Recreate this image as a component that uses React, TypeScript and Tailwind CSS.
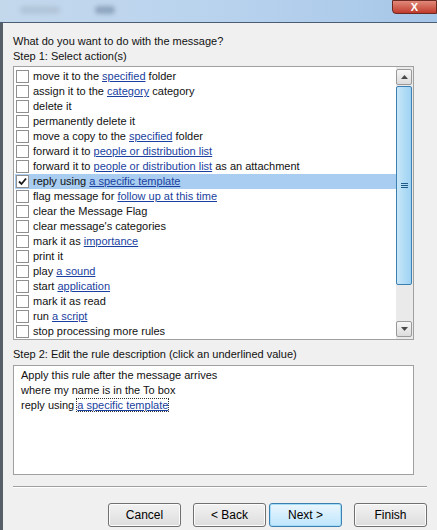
import React from "react";

type Part = string | { link: string };

const actions: Part[][] = [
  ["move it to the ", { link: "specified" }, " folder"],
  ["assign it to the ", { link: "category" }, " category"],
  ["delete it"],
  ["permanently delete it"],
  ["move a copy to the ", { link: "specified" }, " folder"],
  ["forward it to ", { link: "people or distribution list" }],
  ["forward it to ", { link: "people or distribution list" }, " as an attachment"],
  ["reply using ", { link: "a specific template" }],
  ["flag message for ", { link: "follow up at this time" }],
  ["clear the Message Flag"],
  ["clear message's categories"],
  ["mark it as ", { link: "importance" }],
  ["print it"],
  ["play ", { link: "a sound" }],
  ["start ", { link: "application" }],
  ["mark it as read"],
  ["run ", { link: "a script" }],
  ["stop processing more rules"],
];

function Checkbox({ checked }: { checked?: boolean }) {
  return (
    <span className="w-[13px] h-[13px] shrink-0 border border-[#8f8f8f] bg-white flex items-center justify-center">
      {checked && (
        <svg width="9" height="9" viewBox="0 0 9 9">
          <path d="M1 4.5 L3.5 7 L8 1.5" fill="none" stroke="#1a1a1a" strokeWidth="1.8" />
        </svg>
      )}
    </span>
  );
}

function Btn({ label, primary }: { label: string; primary?: boolean }) {
  return (
    <button
      className={
        "w-[73px] h-[24px] rounded-[3px] text-[12px] text-black border " +
        (primary
          ? "border-[#3c7fb1] bg-gradient-to-b from-[#eaf6fd] to-[#bee6fd] shadow-[inset_0_0_0_1px_#a6def9]"
          : "border-[#707070] bg-gradient-to-b from-[#f2f2f2] to-[#dddddd] shadow-[inset_0_0_0_1px_#fcfcfc]")
      }
    >
      {label}
    </button>
  );
}

export default function App() {
  return (
    <div className="w-[437px] h-[530px] overflow-hidden bg-[#f0f0f0] flex flex-col text-[11px] text-[#111]" style={{ fontFamily: '"Liberation Sans", Arial, sans-serif' }}>
      {/* title bar */}
      <div className="h-[23px] shrink-0 relative bg-gradient-to-r from-[#c4d8ec] via-[#b9d3ee] to-[#a6c6e8] border-b border-[#4a5d73]">
        <div className="absolute left-[20px] top-[6px] w-[40px] h-[8px] rounded bg-[#b2c5d9] blur-[2px]" />
        <div className="absolute left-[95px] top-[6px] w-[20px] h-[8px] rounded bg-[#8fa6c0] blur-[2px]" />
        <div className="absolute right-0 top-0 w-[45px] h-[14px] rounded-bl-[4px] bg-gradient-to-b from-[#e0897a] to-[#c0392b] border border-[#6d2a22] flex items-center justify-center text-white text-[11px] font-bold">
          X
        </div>
      </div>

      <div className="flex-1 flex border-l-[3px] border-[#565e68]">
        <div className="flex-1 pl-[10px] pr-[10px] flex flex-col">
          <div className="mt-[11px] leading-[15px]">What do you want to do with the message?</div>
          <div className="leading-[15px]">Step 1: Select action(s)</div>

          {/* action list */}
          <div className="mt-[2px] w-[401px] h-[274px] border border-[#a0a0a0] bg-white flex">
            <div className="flex-1 pt-[2px] pl-[1px]">
              {actions.map((parts, i) => {
                const selected = i === 7;
                return (
                  <div key={i} className={"h-[15px] flex items-center gap-[4px] pl-[1px] " + (selected ? "bg-[#a8cdf0]" : "")}>
                    <Checkbox checked={selected} />
                    <span className="whitespace-nowrap leading-[15px]">
                      {parts.map((p, j) =>
                        typeof p === "string" ? (
                          <span key={j}>{p}</span>
                        ) : (
                          <span key={j} className="text-[#1a3fa0] underline">{p.link}</span>
                        )
                      )}
                    </span>
                  </div>
                );
              })}
            </div>
            {/* scrollbar */}
            <div className="w-[17px] bg-[#eaeaea] flex flex-col py-[2px] pr-[1px]">
              <div className="h-[16px] border border-[#9a9a9a] rounded-[2px] bg-gradient-to-b from-[#f7f7f7] to-[#dcdcdc] flex items-center justify-center">
                <svg width="7" height="4" viewBox="0 0 7 4"><path d="M0 4 L3.5 0 L7 4Z" fill="#4a4a4a" /></svg>
              </div>
              <div className="mt-[1px] h-[199px] border border-[#3c7fb1] rounded-[2px] bg-gradient-to-r from-[#c8e7f9] via-[#b1dcf6] to-[#9fd2f3] flex items-center justify-center">
                <svg width="7" height="7" viewBox="0 0 7 7">
                  <path d="M0 1.5 H7 M0 3.5 H7 M0 5.5 H7" stroke="#1d5a85" strokeWidth="1" />
                </svg>
              </div>
              <div className="flex-1" />
              <div className="h-[16px] border border-[#9a9a9a] rounded-[2px] bg-gradient-to-b from-[#f7f7f7] to-[#dcdcdc] flex items-center justify-center">
                <svg width="7" height="4" viewBox="0 0 7 4"><path d="M0 0 L3.5 4 L7 0Z" fill="#4a4a4a" /></svg>
              </div>
            </div>
          </div>

          <div className="mt-[7px] leading-[15px]">Step 2: Edit the rule description (click an underlined value)</div>
          <div className="mt-[3px] w-[401px] h-[110px] border border-[#a0a0a0] bg-white pl-[7px] pt-[2px] leading-[15px]">
            <div>Apply this rule after the message arrives</div>
            <div>where my name is in the To box</div>
            <div>
              reply using{" "}
              <span className="text-[#1a3fa0] underline outline-1 outline-dotted outline-[#333]">a specific template</span>
            </div>
          </div>

          <div className="mt-[11px] w-[414px] border-t border-[#a0a0a0] border-b border-b-white" />

          <div className="mt-[15px] flex justify-end gap-[12px] w-[414px]">
            <Btn label="Cancel" />
            <div className="flex gap-[3px]">
              <Btn label="< Back" />
              <Btn label="Next >" primary />
            </div>
            <Btn label="Finish" />
          </div>
        </div>
      </div>
    </div>
  );
}
